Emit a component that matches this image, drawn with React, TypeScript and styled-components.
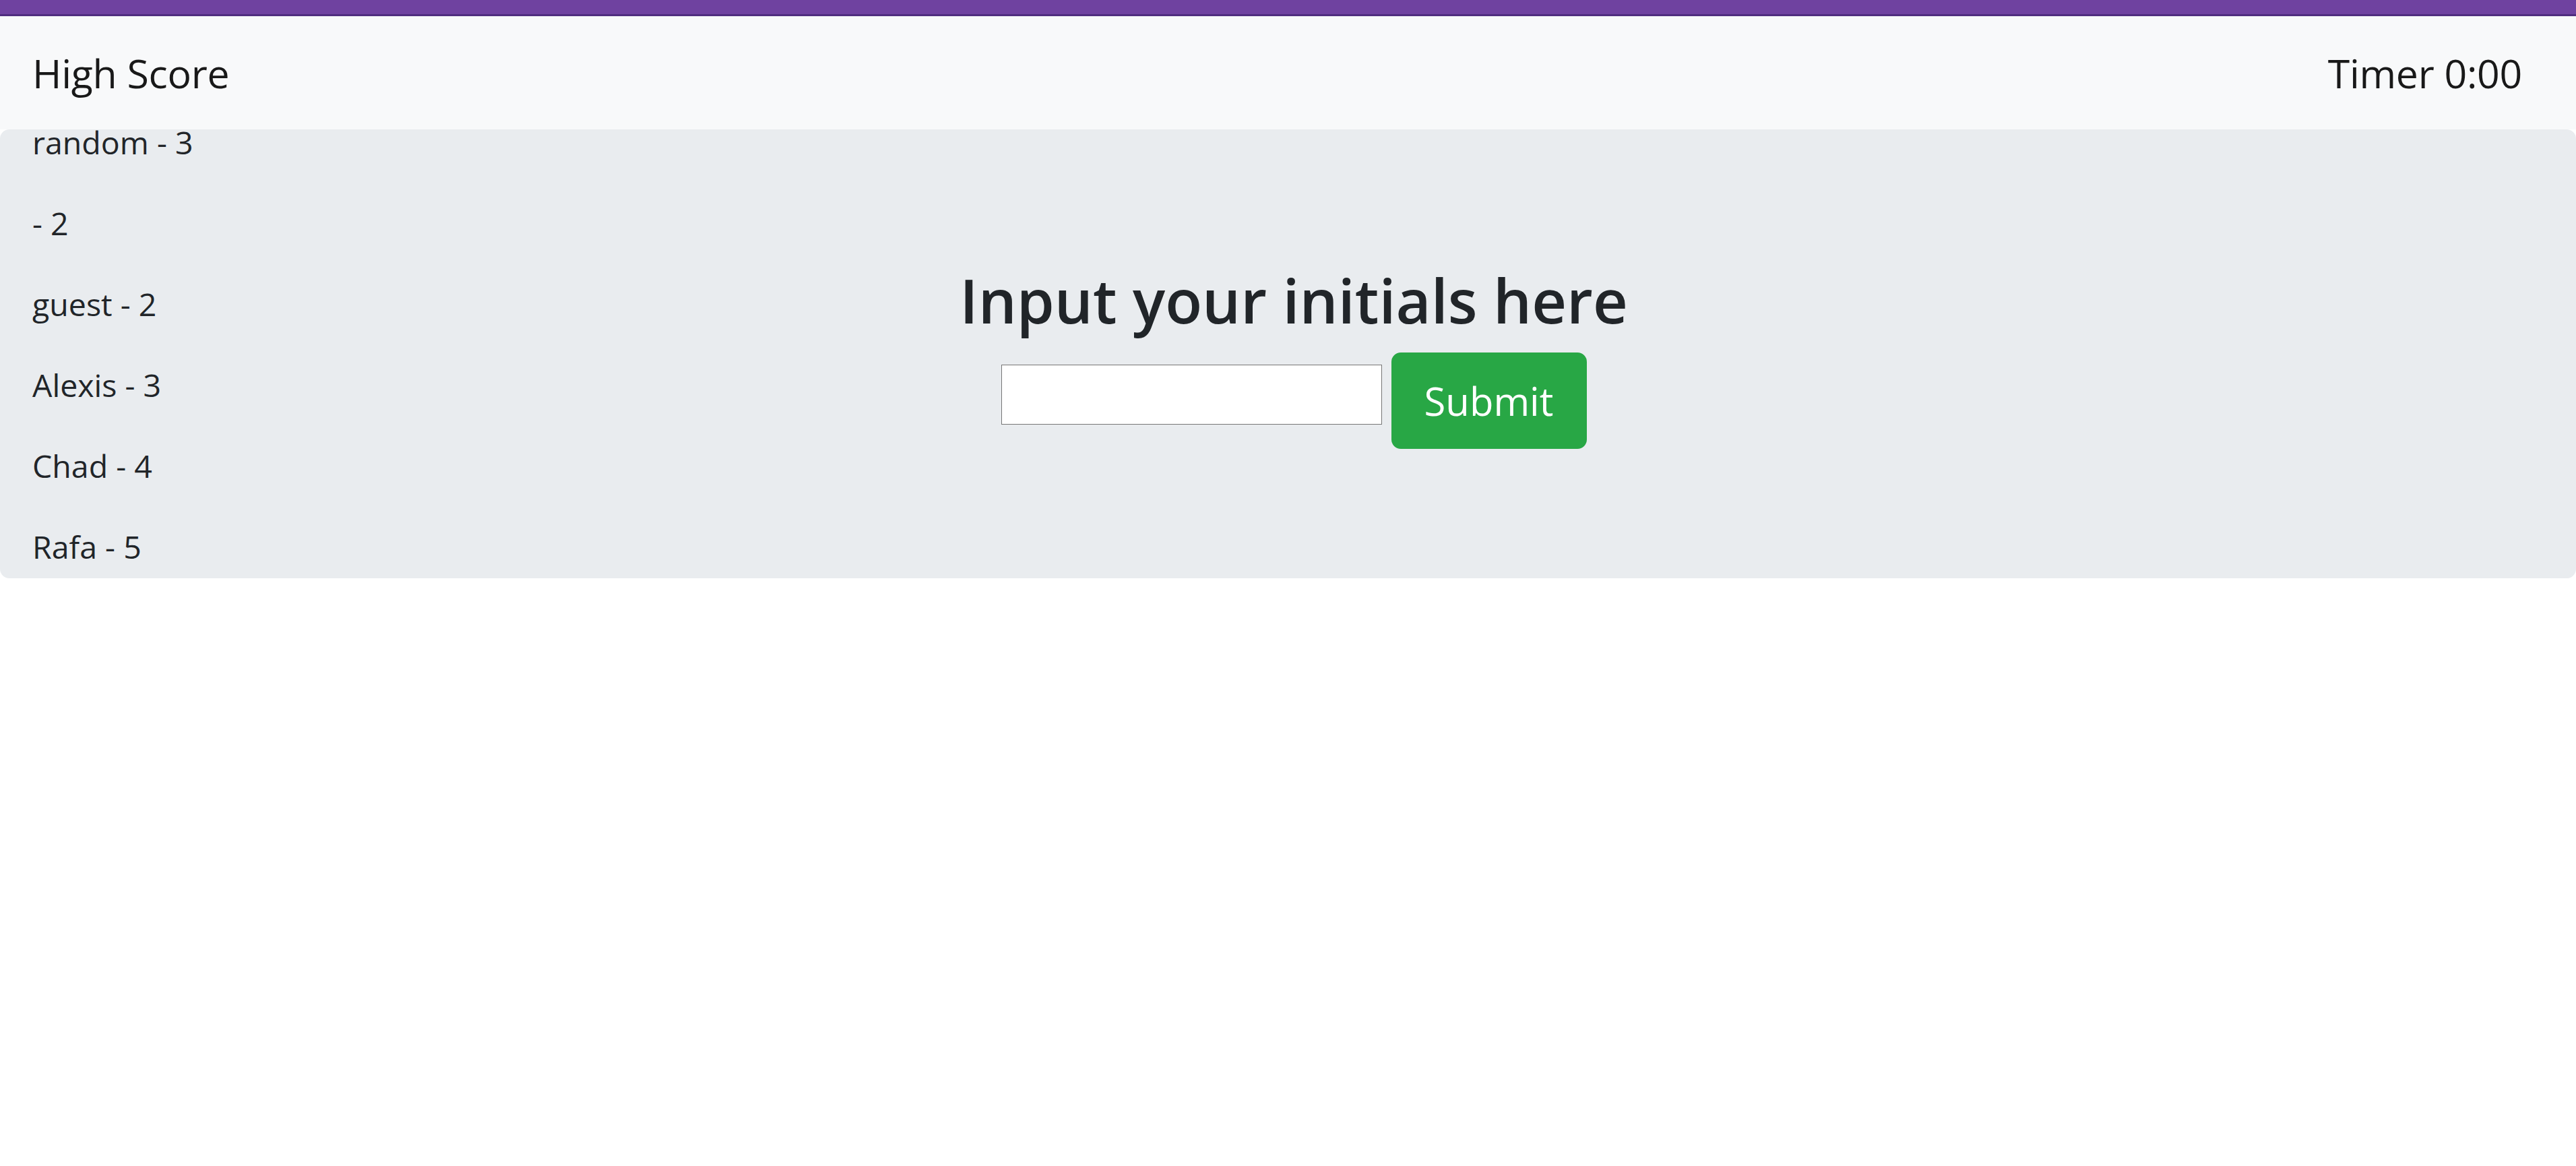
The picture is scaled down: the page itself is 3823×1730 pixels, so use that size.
import React from "react";
import styled, { createGlobalStyle } from "styled-components";

const GlobalStyle = createGlobalStyle`
  html, body {
    margin: 0;
    padding: 0;
    background: #ffffff;
  }
  body {
    font-family: "Open Sans", "Noto Sans", "Liberation Sans", sans-serif;
    color: #212529;
  }
  * { box-sizing: border-box; }
`;

const TopStripe = styled.div`
  height: 24px;
  background: #6f42a0;
  border-bottom: 3px solid #4f2d7f;
`;

const NavBar = styled.nav`
  display: flex;
  justify-content: space-between;
  align-items: center;
  height: 168px;
  padding: 24px 80px 24px 48px;
  background: #f8f9fa;
`;

const NavText = styled.span`
  font-size: 59px;
  font-weight: 500;
  line-height: 90px;
  padding: 15px 0;
  color: rgba(0, 0, 0, 0.9);
  letter-spacing: -0.3px;
`;

const Jumbotron = styled.section`
  display: grid;
  background: #e9ecef;
  border-radius: 14px;
`;

const ScoreList = styled.div`
  grid-area: 1 / 1;
  align-self: start;
  margin-top: -17px;
  padding-left: 48px;
`;

const ScoreItem = styled.p`
  margin: 0 0 48px;
  font-size: 46.5px;
  line-height: 72px;
  color: #212529;

  &:last-child {
    margin-bottom: 0;
  }
`;

const Center = styled.div`
  grid-area: 1 / 1;
  padding: 192px 96px 192px 113px;
  text-align: center;
`;

const Heading = styled.h2`
  margin: 4px 0 20px;
  font-size: 90px;
  line-height: 115px;
  font-weight: 600;
  color: #212529;
`;

const FormRow = styled.form`
  display: flex;
  justify-content: center;
  align-items: flex-start;
  gap: 14px;
`;

const InitialsInput = styled.input`
  width: 565px;
  height: 89px;
  margin-top: 18px;
  border: 1px solid #767676;
  background: #ffffff;
  font-size: 40px;
  padding: 0 8px;
`;

const SubmitButton = styled.button`
  width: 290px;
  height: 143px;
  background: #28a745;
  border: 3px solid #28a745;
  border-radius: 14px;
  color: #ffffff;
  font-family: inherit;
  font-size: 58px;
  line-height: 90px;
  padding: 0;
  cursor: pointer;
`;

const scores = ["random - 3", " - 2", "guest - 2", "Alexis - 3", "Chad - 4", "Rafa - 5"];

export default function App() {
  return (
    <>
      <GlobalStyle />
      <TopStripe />
      <NavBar>
        <NavText>High Score</NavText>
        <NavText>Timer 0:00</NavText>
      </NavBar>
      <Jumbotron>
        <ScoreList>
          {scores.map((s, i) => (
            <ScoreItem key={i}>{s}</ScoreItem>
          ))}
        </ScoreList>
        <Center>
          <Heading>Input your initials here</Heading>
          <FormRow onSubmit={(e) => e.preventDefault()}>
            <InitialsInput type="text" />
            <SubmitButton type="submit">Submit</SubmitButton>
          </FormRow>
        </Center>
      </Jumbotron>
    </>
  );
}
